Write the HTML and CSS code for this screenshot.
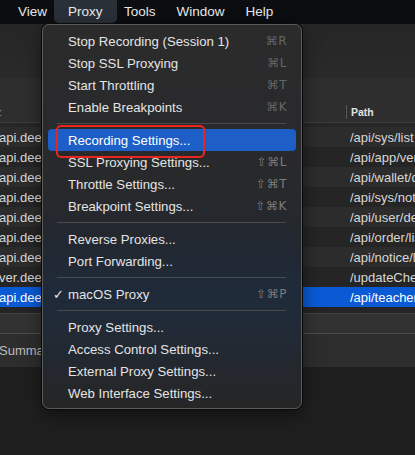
FILE: index.html
```html
<!DOCTYPE html>
<html>
<head>
<meta charset="utf-8">
<link rel="stylesheet" href="styles.css">
</head>
<body>
<div class="screen">
  <div class="menubar">
    <span class="mb-item first">View</span>
    <span class="mb-item active">Proxy</span>
    <span class="mb-item">Tools</span>
    <span class="mb-item">Window</span>
    <span class="mb-item">Help</span>
  </div>
  <div class="toolbar"></div>
  <div class="filterbar"></div>
  <div class="header">
    <span class="h-host">:</span>
    <span class="h-path">Path</span>
  </div>
  <div class="partial"></div>
  <div class="rows">
    <div class="row alt"><span class="host">api.deer</span><span class="path">/api/sys/list</span></div>
    <div class="row"><span class="host">api.deer</span><span class="path">/api/app/version</span></div>
    <div class="row alt"><span class="host">api.deer</span><span class="path">/api/wallet/detail</span></div>
    <div class="row"><span class="host">api.deer</span><span class="path">/api/sys/notice</span></div>
    <div class="row alt"><span class="host">api.deer</span><span class="path">/api/user/detail</span></div>
    <div class="row"><span class="host">api.deer</span><span class="path">/api/order/list</span></div>
    <div class="row alt"><span class="host">api.deer</span><span class="path">/api/notice/list</span></div>
    <div class="row"><span class="host">ver.deer</span><span class="path">/updateCheck</span></div>
    <div class="row selected"><span class="host">api.deer</span><span class="path">/api/teacher</span></div>
  </div>
  <div class="gap"></div>
  <div class="bar1"></div>
  <div class="bar2"><span class="summary">Summary</span></div>
  <div class="bottom"></div>

  <div class="menu">
    <div class="item"><span class="label">Stop Recording (Session 1)</span><span class="key dim">⌘R</span></div>
    <div class="item"><span class="label">Stop SSL Proxying</span><span class="key dim">⌘L</span></div>
    <div class="item"><span class="label">Start Throttling</span><span class="key dim">⌘T</span></div>
    <div class="item"><span class="label">Enable Breakpoints</span><span class="key dim">⌘K</span></div>
    <div class="sep"></div>
    <div class="item hl"><span class="label">Recording Settings...</span></div>
    <div class="item"><span class="label">SSL Proxying Settings...</span><span class="key">⇧⌘L</span></div>
    <div class="item"><span class="label">Throttle Settings...</span><span class="key">⇧⌘T</span></div>
    <div class="item"><span class="label">Breakpoint Settings...</span><span class="key">⇧⌘K</span></div>
    <div class="sep"></div>
    <div class="item"><span class="label">Reverse Proxies...</span></div>
    <div class="item"><span class="label">Port Forwarding...</span></div>
    <div class="sep"></div>
    <div class="item"><span class="check">✓</span><span class="label">macOS Proxy</span><span class="key">⇧⌘P</span></div>
    <div class="sep"></div>
    <div class="item"><span class="label">Proxy Settings...</span></div>
    <div class="item"><span class="label">Access Control Settings...</span></div>
    <div class="item"><span class="label">External Proxy Settings...</span></div>
    <div class="item"><span class="label">Web Interface Settings...</span></div>
  </div>
  <div class="redbox"></div>
</div>
</body>
</html>
```

FILE: styles.css
```css
* { box-sizing: border-box; }
html, body {
  margin: 0;
  padding: 0;
  background: #1f1f1f;
}
.screen {
  position: relative;
  width: 415px;
  height: 455px;
  overflow: hidden;
  font-family: "Liberation Sans", "DejaVu Sans", Arial, sans-serif;
  color: #dcdcdc;
  display: flex;
  flex-direction: column;
}
.menubar {
  height: 24px;
  flex: none;
  background: #0b0d11;
  display: flex;
  align-items: flex-start;
  font-size: 13.5px;
  color: #e8e8e8;
}
.mb-item {
  height: 23px;
  line-height: 23px;
  padding: 0 10.5px;
}
.mb-item.first { margin-left: 7.5px; }
.mb-item.active {
  padding: 0 14.5px 0 14px;
  margin: 0 -3.5px 0 -3.5px;
  background: #2a3038;
  border-radius: 0 0 5px 5px;
}
.toolbar {
  height: 54px;
  flex: none;
  background: linear-gradient(#262626, #2a2a2a);
}
.filterbar {
  height: 24px;
  flex: none;
  background: #2e2e2e;
}
.header {
  height: 21px;
  flex: none;
  background: #2e2e2e;
  border-bottom: 1px solid #3c3c3c;
  display: flex;
  align-items: center;
  position: relative;
  font-size: 10.5px;
  font-weight: bold;
  color: #e2e2e2;
}
.h-host { margin-left: -1px; color: #9a9a9a; font-weight: normal; }
.h-path {
  margin-left: auto;
  width: 69px;
  padding-left: 4px;
  border-left: 1px solid #555;
  height: 14px;
  line-height: 14px;
}
.partial {
  height: 4px;
  flex: none;
  background: #262626;
}
.rows { flex: none; }
.row {
  height: 20px;
  display: flex;
  align-items: center;
  font-size: 13px;
  background: #252525;
  color: #d8d8d8;
  white-space: nowrap;
  overflow: hidden;
}
.row.alt { background: #2c2c2c; }
.row.selected { background: #0a5ad6; color: #ffffff; }
.host { margin-left: -1px; width: 51px; flex: none; }
.path { margin-left: auto; width: 65px; flex: none; overflow: hidden; }
.gap { height: 6px; flex: none; background: #242424; }
.bar1 {
  height: 20px;
  flex: none;
  background: #323232;
  border-top: 1px solid #434343;
}
.bar2 {
  height: 34px;
  flex: none;
  background: #2d2d2d;
  border-top: 1px solid #4c4c4c;
  display: flex;
  align-items: center;
  font-size: 13px;
  color: #bdbdbd;
}
.summary { margin-left: -1px; }
.bottom { flex: 1; background: #1f1f1f; }

.menu {
  position: absolute;
  left: 42px;
  top: 24px;
  width: 260px;
  padding: 5px 5px 4px;
  border-radius: 7px;
  border: 1px solid #5a5a5a;
  box-shadow: 0 0 0 1px #0a0a0a, 0 6px 18px rgba(0,0,0,0.5);
  background: linear-gradient(#2b2b2c 0%, #28292b 42%, #232830 55%, #1f2a3a 70%, #212a36 80%, #24272c 92%, #262627 100%);
  font-size: 13.2px;
  color: #e4e4e4;
}
.item {
  height: 22px;
  display: flex;
  align-items: center;
  padding: 0 9px 0 20px;
  position: relative;
  border-radius: 4px;
  white-space: nowrap;
}
.item.hl { background: #1d5fc6; color: #ffffff; }
.check {
  position: absolute;
  left: 5px;
  font-size: 13px;
  color: #e8e8e8;
  font-family: "DejaVu Sans", sans-serif;
}
.key {
  margin-left: auto;
  font-size: 12px;
  color: #7c7c7c;
  font-family: "DejaVu Sans", sans-serif;
  letter-spacing: 0.5px;
}
.key.dim { color: #666666; }
.sep {
  height: 1px;
  margin: 5px 10px 5px 9px;
  background: #4a4a4a;
}
.redbox {
  position: absolute;
  left: 56px;
  top: 125px;
  width: 149px;
  height: 33px;
  border: 2px solid #e8261d;
  border-radius: 5px;
}
```
